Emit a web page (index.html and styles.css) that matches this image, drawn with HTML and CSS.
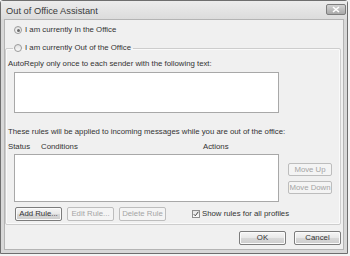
FILE: index.html
```html
<!DOCTYPE html>
<html lang="en">
<head>
    <meta charset="UTF-8">
    <title>Out of Office Assistant</title>
    <link rel="stylesheet" href="styles.css">
</head>
<body>

<div class="window">
    <div class="titlebar">
        <span class="title">Out of Office Assistant</span>
        <span class="close">
            <svg width="8" height="7" viewBox="0 0 8 7"><path d="M1 1 L7 6 M7 1 L1 6" stroke="#fff" stroke-width="1.6"/></svg>
        </span>
    </div>

    <div class="client">
        <label class="radio-row">
            <span class="radio checked"></span>I am currently In the Office
        </label>

        <fieldset class="group">
            <legend class="radio-row">
                <span class="radio"></span>I am currently Out of the Office
            </legend>

            <p class="label first">AutoReply only once to each sender with the following text:</p>
            <div class="textbox"></div>

            <p class="label rules">These rules will be applied to incoming messages while you are out of the office:</p>
            <div class="columns">
                <span class="col-status">Status</span>
                <span class="col-cond">Conditions</span>
                <span class="col-actions">Actions</span>
            </div>

            <div class="rules-area">
                <div class="rule-list"></div>
                <div class="side-buttons">
                    <button class="btn disabled side">Move Up</button>
                    <button class="btn disabled side">Move Down</button>
                </div>
            </div>

            <div class="button-row">
                <button class="btn">Add Rule...</button>
                <button class="btn disabled">Edit Rule...</button>
                <button class="btn disabled">Delete Rule</button>
                <label class="check-row">
                    <span class="checkbox">
                        <svg width="6" height="6" viewBox="0 0 6 6"><path d="M0.8 3.2 L2.3 4.8 L5.3 0.8" fill="none" stroke="#444" stroke-width="1"/></svg>
                    </span>Show rules for all profiles
                </label>
            </div>
        </fieldset>

        <div class="footer">
            <button class="btn ok">OK</button>
            <button class="btn cancel">Cancel</button>
        </div>
    </div>
</div>

</body>
</html>
```

FILE: styles.css
```css
body {
    margin: 0;
    background: #f4f4f4;
    font-family: "Liberation Sans", Arial, sans-serif;
    font-size: 7.8px;
    color: #333;
}

.window {
    width: 348px;
    height: 254px;
    box-sizing: border-box;
    border: 1px solid #6e6e6e;
    border-radius: 3px 3px 0 0;
    background: #d8d8d8;
    display: flex;
    flex-direction: column;
}

.titlebar {
    height: 18px;
    display: flex;
    justify-content: space-between;
    align-items: flex-start;
    background: linear-gradient(#ececec, #dcdcdc);
}

.title {
    font-size: 9.3px;
    line-height: 11px;
    margin: 5px 0 0 5px;
    color: #3a3a3a;
}

.close {
    width: 20px;
    height: 11px;
    box-sizing: border-box;
    margin: 3px 1px 0 0;
    border: 1px solid #7d7d7d;
    border-radius: 2px;
    background: linear-gradient(#d2d2d2, #a9a9a9);
    display: flex;
    align-items: center;
    justify-content: center;
}

.client {
    flex: 1;
    margin: 0 3px 3px 3px;
    border: 1px solid #b4b4b4;
    background: #f0f0f0;
    padding-top: 4px;
    display: flex;
    flex-direction: column;
}

.radio-row {
    display: flex;
    align-items: center;
    height: 12px;
    line-height: 12px;
}

.client > .radio-row {
    padding-left: 9px;
}

.radio {
    width: 8px;
    height: 8px;
    box-sizing: border-box;
    border-radius: 50%;
    border: 1px solid #9a9a9a;
    background: linear-gradient(#e2e2e2, #fafafa);
    margin-right: 3px;
    position: relative;
}

.radio.checked::after {
    content: "";
    position: absolute;
    left: 1.5px;
    top: 1.5px;
    width: 3px;
    height: 3px;
    border-radius: 50%;
    background: #6a6a6a;
}

.group {
    margin: 6px 2px 0 0;
    padding: 0 2px 3px 2px;
    border: 1px solid #cdcdcd;
    border-radius: 2px;
    box-shadow: inset 0 0 0 1px #fafafa;
    min-width: 0;
}

.group legend {
    margin-left: 5px;
    padding: 0 2px 0 1px;
}

.label {
    margin: 0;
    line-height: 10px;
    white-space: nowrap;
}

.label.first {
    margin-top: 5px;
}

.textbox {
    margin: 3px 0 0 6px;
    width: 265px;
    height: 41px;
    box-sizing: border-box;
    border: 1px solid #a8a8a8;
    background: #fff;
}

.label.rules {
    margin-top: 14px;
}

.columns {
    margin-top: 5px;
    display: flex;
    line-height: 10px;
}

.col-status {
    width: 33px;
}

.col-cond {
    width: 162px;
}

.rules-area {
    margin-top: 2px;
    display: flex;
    align-items: flex-start;
}

.rule-list {
    margin-left: 6px;
    width: 265px;
    height: 48px;
    box-sizing: border-box;
    border: 1px solid #a8a8a8;
    background: #fff;
}

.side-buttons {
    margin: 9px 0 0 9px;
    display: flex;
    flex-direction: column;
    gap: 5px;
}

.btn {
    font-family: inherit;
    font-size: 7.8px;
    color: #333;
    height: 14px;
    padding: 0;
    box-sizing: border-box;
    border: 1px solid #7c7c7c;
    border-radius: 2px;
    background: linear-gradient(#f6f6f6 0%, #e8e8e8 50%, #d8d8d8 51%, #cdcdcd 100%);
    box-shadow: inset 0 0 0 1px #fbfbfb;
    line-height: 12px;
    white-space: nowrap;
}

.btn.disabled {
    color: #a4a4a4;
    border-color: #bdbdbd;
    background: #f4f4f4;
    box-shadow: none;
}

.btn.side {
    width: 44px;
    height: 13px;
}

.button-row {
    margin-top: 5px;
    padding-left: 7px;
    display: flex;
    align-items: center;
    gap: 5px;
}

.button-row .btn {
    width: 47px;
}

.check-row {
    margin-left: 21px;
    display: flex;
    align-items: center;
    line-height: 10px;
}

.checkbox {
    width: 8px;
    height: 8px;
    box-sizing: border-box;
    border: 1px solid #8e8e8e;
    background: linear-gradient(#e4e4e4, #fbfbfb);
    margin-right: 2px;
    display: flex;
    align-items: center;
    justify-content: center;
}

.footer {
    margin: 6px 2px 0 0;
    display: flex;
    justify-content: flex-end;
    gap: 8px;
}

.footer .btn {
    width: 47px;
    height: 14px;
}
```
